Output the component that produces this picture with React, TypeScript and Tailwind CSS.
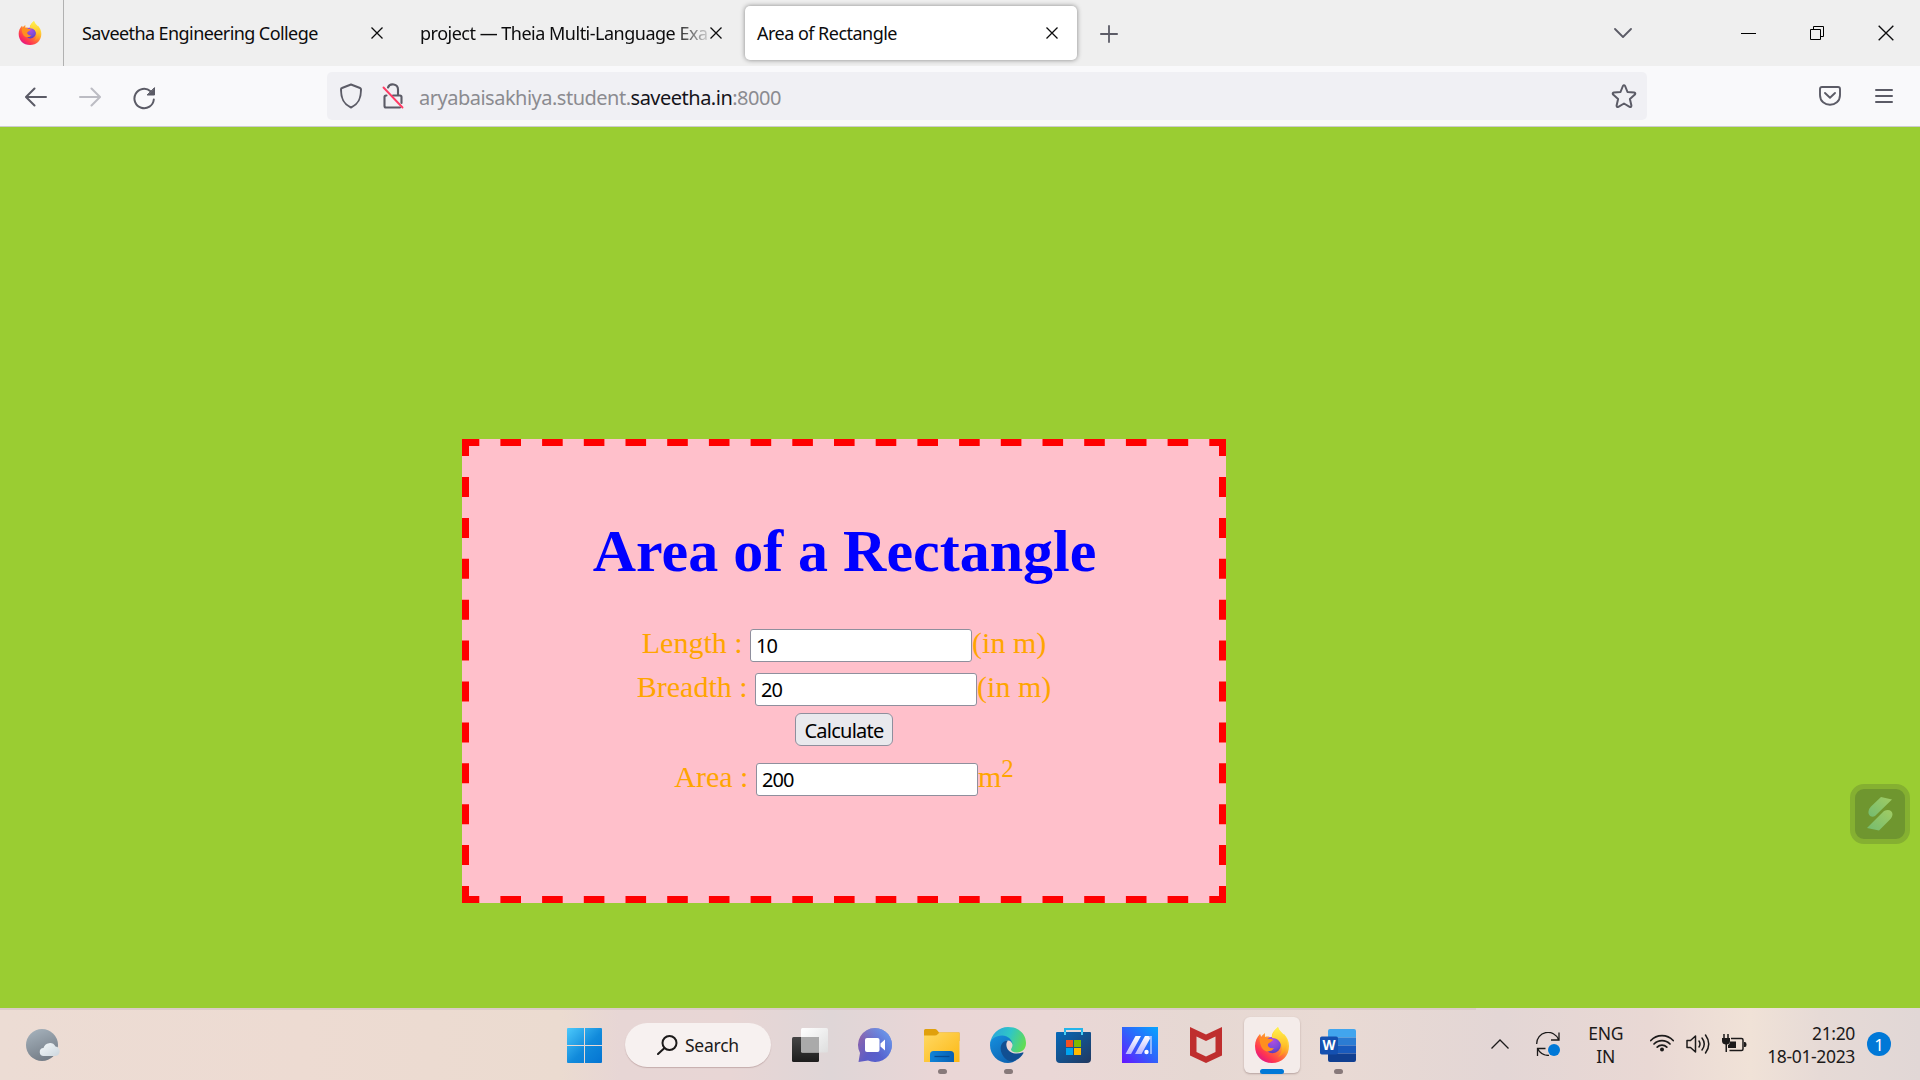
import React from "react";

const ui = "font-['Noto_Sans',sans-serif]";

function FirefoxLogo({ id, size }: { id: string; size: number }) {
  return (
    <svg width={size} height={size} viewBox="0 0 36 36" className="shrink-0">
      <defs>
        <linearGradient id={`${id}-body`} x1="0.85" y1="0.1" x2="0.2" y2="0.95">
          <stop offset="0" stopColor="#fff44f" />
          <stop offset="0.3" stopColor="#ffbd30" />
          <stop offset="0.55" stopColor="#ff7139" />
          <stop offset="0.8" stopColor="#ff3650" />
          <stop offset="1" stopColor="#e31587" />
        </linearGradient>
        <linearGradient id={`${id}-flame`} x1="0.5" y1="0" x2="0.5" y2="1">
          <stop offset="0" stopColor="#fff44f" />
          <stop offset="0.6" stopColor="#ffc22b" />
          <stop offset="1" stopColor="#ff8a16" />
        </linearGradient>
        <radialGradient id={`${id}-globe`} cx="0.5" cy="0.25" r="0.8">
          <stop offset="0" stopColor="#b04de0" />
          <stop offset="0.6" stopColor="#7a4bd8" />
          <stop offset="1" stopColor="#5438b8" />
        </radialGradient>
      </defs>
      <path fill={`url(#${id}-body)`} d="M1 19C1 14 3 10 6 7l1 3c1-2 3-3 4-4l0 4c3-1 5 0 7 1C17 6 21 3 24 0c1 4 4 6 5 8l1-1c3 3 5 7 5 12 0 10-7 17-17 17S1 29 1 19Z" />
      <circle cx="18.6" cy="18" r="8.2" fill={`url(#${id}-globe)`} />
      <path fill={`url(#${id}-flame)`} d="M18 11c0-5 3-8 6-11 1 5 8 7 9 14 .8 7-3 14-9 16 3-3 4-6 4-9 0-5-4-10-10-10Z" />
      <path fill="#ff8f1f" d="M6 7l1 4c2-1 4-1 6 0 2 2 5 0 6 2-1 2-4 2-5 4-1 3 3 5 6 4-2 4-9 5-12 0-2-3-3-8-2-14Z" />
    </svg>
  );
}

function Close({ size = 12, w = 1.3 }: { size?: number; w?: number }) {
  return (
    <svg width={size} height={size} viewBox="0 0 12 12" className="shrink-0" fill="none" stroke="#0c0c0d" strokeWidth={w}>
      <path d="M.5.5l11 11M11.5.5l-11 11" />
    </svg>
  );
}

function TabStrip() {
  return (
    <header className="flex h-[66px] items-center bg-[#efefef]">
      <div className="flex h-full w-[64px] items-center border-r border-[#b1b1b1] pl-[18px]">
        <FirefoxLogo id="ff-tab" size={24} />
      </div>
      <div className="flex w-[338px] items-center pl-[18px] pr-[19px]">
        <span className="grow whitespace-nowrap text-[18px] tracking-[-0.58px]">Saveetha Engineering College</span>
        <Close />
      </div>
      <div className="flex w-[338px] items-center justify-between pl-[18px] pr-[18px]">
        <span className="whitespace-nowrap text-[18px] tracking-[-0.5px] [mask-image:linear-gradient(to_right,black_88%,transparent_102%)]">
          project — Theia Multi-Language Exa
        </span>
        <Close />
      </div>
      <div className="ml-[5px] flex h-[54px] w-[332px] items-center justify-between rounded-[5px] bg-white pl-[12px] pr-[19px] shadow-[0_0_5px_rgba(0,0,0,0.45)]">
        <span className="whitespace-nowrap text-[18px] tracking-[-0.52px]">Area of Rectangle</span>
        <Close />
      </div>
      <svg width="18" height="18" viewBox="0 0 18 18" className="relative top-px ml-[23px]" stroke="#5b5b66" strokeWidth="1.8" strokeLinecap="round">
        <path d="M9 .9v16.2M.9 9h16.2" />
      </svg>
      <div className="ml-auto flex items-center">
        <svg width="18" height="10" viewBox="0 0 18 10" className="mr-[109px]" fill="none" stroke="#5b5b66" strokeWidth="1.8" strokeLinecap="round" strokeLinejoin="round">
          <path d="M1 1l8 8 8-8" />
        </svg>
        <div className="mr-[54px] h-px w-[15px] bg-black" />
        <svg width="14" height="14" viewBox="0 0 14 14" className="mr-[54px]" fill="none" stroke="#000">
          <path d="M.5 3.5h10v10H.5zM3.5 3.500V.5h10v10h-3" />
        </svg>
        <div className="mr-[26px]"><Close size={16} w={1} /></div>
      </div>
    </header>
  );
}

function Toolbar() {
  return (
    <nav className="flex h-[61px] items-center border-b border-[#cccccf] bg-[#f9f9fb]">
      <svg width="22" height="20" viewBox="0 0 22 20" className="ml-[25px] mt-[2px]" fill="none" stroke="#5b5b66" strokeWidth="2" strokeLinecap="round" strokeLinejoin="round">
        <path d="M21 10H1.500M9.500 1.500L1 10l8.500 8.500" />
      </svg>
      <svg width="22" height="20" viewBox="0 0 22 20" className="ml-[32px] mt-[2px]" fill="none" stroke="#bcbcc3" strokeWidth="2" strokeLinecap="round" strokeLinejoin="round">
        <path d="M1 10h19.500M12.500 1.500L21 10l-8.500 8.500" />
      </svg>
      <svg width="23" height="23" viewBox="0 0 23 23" className="ml-[32px] mt-[4px]" fill="none" stroke="#5b5b66" strokeWidth="2" strokeLinecap="round">
        <path d="M20.800 12.500A9.700 9.700 0 1 1 17.500 4.200" />
        <path d="M21.500 1v7h-7z" fill="#5b5b66" strokeWidth="1" strokeLinejoin="round" />
      </svg>
      <div className="ml-[171px] flex h-[48px] w-[1320px] items-center rounded-[5px] bg-[#f0f0f4] pl-[12px] pr-[10px]">
        <svg width="24" height="26" viewBox="0 0 24 26" fill="none" stroke="#5b5b66" strokeWidth="2" strokeLinejoin="round">
          <path d="M12 1.500L21 5q1 .4 1 1.500C22 15 20 21 12 24.500 4 21 2 15 2 6.500 2 5.400 2 5.300 3 5Z" />
        </svg>
        <svg width="22" height="26" viewBox="0 0 22 26" className="ml-[19px]" fill="none" stroke="#5b5b66" strokeWidth="2.100" strokeLinecap="round">
          <path d="M6 4.500C8-.5 16 1 16 6.500V12" />
          <path d="M4.500 12.500H4q-1.500 0-1.500 1.500v9q0 1.500 1.500 1.500h14M11 12.500h7q1.500 0 1.500 1.500v6" />
          <path d="M1.500 4.500l19 20" stroke="#ff3b64" strokeWidth="1.900" />
        </svg>
        <span className="ml-[15px] mt-[3px] whitespace-nowrap text-[20px] tracking-[-0.5px] text-[#8b8b90]">
          aryabaisakhiya.student.<span className="text-[#15141a]">saveetha.in</span>:8000
        </span>
        <svg width="26" height="25" viewBox="0 0 26 25" className="ml-auto" fill="none" stroke="#5b5b66" strokeWidth="2" strokeLinejoin="round">
          <path d="M11.900 2q1.100-1.500 2.200 0l2.400 6 6.700.6q1.800.4.700 2l-5 4.400 1.500 6.500q0 2-1.800 1.300L13 19.500l-5.600 3.300q-1.800.7-1.800-1.300L7.100 15l-5-4.400q-1.100-1.600.7-2L9.500 8Z" />
        </svg>
      </div>
      <svg width="22" height="20" viewBox="0 0 22 20" className="ml-auto mr-[34px]" fill="none" stroke="#5b5b66" strokeWidth="1.900" strokeLinecap="round" strokeLinejoin="round">
        <path d="M3 1h16q2 0 2 2v6c0 13-20 13-20 0V3q0-2 2-2Z" />
        <path d="M6 7l5 4.800L16 7" />
      </svg>
      <div className="mr-[27px] flex w-[18px] flex-col gap-[4px]">
        <div className="h-[2px] rounded-full bg-[#5b5b66]" />
        <div className="h-[2px] rounded-full bg-[#5b5b66]" />
        <div className="h-[2px] rounded-full bg-[#5b5b66]" />
      </div>
    </nav>
  );
}

function Field({ label, value, unit }: { label: string; value: string; unit: React.ReactNode }) {
  return (
    <div className="flex h-[33px] items-center justify-center whitespace-pre text-[30px] leading-[33px] text-[#ffa500]">
      <span className="mb-[6px]">{label} : </span>
      <input
        readOnly
        value={value}
        className="h-[33px] w-[222px] rounded-[3px] border border-[#8f8f9d] bg-white px-[5px] font-['Noto_Sans',sans-serif] text-[20px] tracking-[-0.9px] text-black outline-none"
      />
      <span className="mb-[6px]">{unit}</span>
    </div>
  );
}

function DashedFrame() {
  return (
    <svg width="764" height="464" className="pointer-events-none absolute inset-0" stroke="#f00" strokeWidth="7">
      <path d="M0 3.500H764M0 460.500H764" strokeDasharray="20.600 21.100" strokeDashoffset="3.300" />
      <path d="M3.500 0V464M760.500 0V464" strokeDasharray="20 20.900" strokeDashoffset="2.900" />
    </svg>
  );
}

function Page() {
  return (
    <main className="relative h-[881px] bg-[#9acd32] pl-[462px] pt-[312px]">
      <section className="relative h-[464px] w-[764px] bg-[#ffc0cb] pt-[78px] text-center font-['Liberation_Serif',serif]">
        <DashedFrame />
        <h1 className="pl-px text-[60px] font-bold leading-[69px] text-[#0000ff]">Area of a Rectangle</h1>
        <div className="mt-[43px]">
          <Field label="Length" value="10" unit="(in m)" />
        </div>
        <div className="mt-[11px]">
          <Field label="Breadth" value="20" unit="(in m)" />
        </div>
        <button className="mx-auto mt-[7px] block h-[33px] w-[98px] rounded-[6px] border border-[#8f8f9d] bg-[#e9e9ed] pt-[2px] font-['Noto_Sans',sans-serif] text-[20px] leading-[29px] tracking-[-0.75px] text-black">
          Calculate
        </button>
        <div className="mt-[17px]">
          <Field label="Area" value="200" unit={<>m<sup className="relative -top-[10px] align-baseline text-[25px] leading-none">2</sup></>} />
        </div>
      </section>
      <div className="absolute right-[10px] top-[657px] flex size-[60px] items-center justify-center rounded-[14px] border-[5px] border-[#85b031] bg-[#6f962f]">
        <svg width="26" height="34" viewBox="0 0 26 34">
          <defs>
            <linearGradient id="leaf" x1="1" y1="0" x2="0" y2="1">
              <stop offset="0" stopColor="#a1cc64" />
              <stop offset="1" stopColor="#74bb70" />
            </linearGradient>
          </defs>
          <path fill="url(#leaf)" d="M14 0l11 2.500L8 19c-4 2-7-1-6.500-4.500Q1.500 12 4 9.500Z" />
          <path fill="url(#leaf)" d="M0 31l17-17c4-2 8-1 8.500 3 0 2-1 4-2.500 5.500L12 33.500Z" />
        </svg>
      </div>
    </main>
  );
}

function AppCell({ children, running }: { children: React.ReactNode; running?: boolean }) {
  return (
    <div className="relative flex h-full w-[66px] items-center justify-center">
      {children}
      {running && <span className="absolute bottom-[6px] h-[5px] w-[9px] rounded-full bg-[#87797a]" />}
    </div>
  );
}

function Apps() {
  return (
    <div className="ml-[6px] flex h-full">
      <AppCell>
        <svg width="36" height="34" viewBox="0 0 36 34">
          <defs>
            <linearGradient id="tv-dark" x1="0" y1="0" x2="0" y2="1"><stop stopColor="#454545" /><stop offset="1" stopColor="#1d1d1d" /></linearGradient>
            <linearGradient id="tv-light" x1="0" y1="0" x2="1" y2="1"><stop stopColor="#fff" /><stop offset="1" stopColor="#dedede" /></linearGradient>
          </defs>
          <rect y="9" width="27" height="25" rx="1.500" fill="url(#tv-dark)" />
          <rect x="9" width="27" height="24.500" rx="1.500" fill="url(#tv-light)" />
          <path d="M9 9h18v15.500H10.500Q9 24.500 9 23Z" fill="#aaa" />
        </svg>
      </AppCell>
      <AppCell>
        <svg width="34" height="34" viewBox="0 0 34 34" className="mr-[2px]">
          <defs><linearGradient id="chat" x1="0.100" y1="0.200" x2="0.900" y2="0.700"><stop stopColor="#8a65ae" /><stop offset="0.500" stopColor="#5d5cc6" /><stop offset="1" stopColor="#5563d0" /></linearGradient>
          <linearGradient id="chat-top" x1="1" y1="0" x2="0.400" y2="0.600"><stop stopColor="#6fa6f2" /><stop offset="1" stopColor="#6fa6f2" stopOpacity="0" /></linearGradient></defs>
          <path fill="url(#chat)" d="M17 0a17 17 0 1 1-7 32.500L.5 34 2 25A17 17 0 0 1 17 0Z" />
          <path fill="url(#chat-top)" d="M17 0a17 17 0 1 1-7 32.500L.5 34 2 25A17 17 0 0 1 17 0Z" />
          <rect x="7" y="10" width="14.500" height="14" rx="2" fill="#fff" />
          <path d="M22.500 15.500l4.500-4v11l-4.500-4z" fill="#fff" />
        </svg>
      </AppCell>
      <AppCell running>
        <svg width="36" height="33" viewBox="0 0 36 33">
          <defs><linearGradient id="fold" x1="0" y1="0" x2="1" y2="1"><stop stopColor="#ffd964" /><stop offset="1" stopColor="#fcb814" /></linearGradient>
          <linearGradient id="fold-blue" x1="0" y1="0" x2="1" y2="0"><stop stopColor="#0f83d8" /><stop offset="1" stopColor="#0860b4" /></linearGradient></defs>
          <path d="M0 1.500Q0 0 1.500 0H11q1 0 2 1l2 2.500h20.500V12H0Z" fill="#e0a00c" />
          <path d="M0 6.500h11q1.500 0 3-1.500l1.500-1.500h19q1 0 1 1V33H0Z" fill="url(#fold)" />
          <path d="M6 33v-7.500q0-3.500 3.500-3.500h17q3.500 0 3.500 3.500V33Z" fill="url(#fold-blue)" />
          <path d="M10.500 27.500h15" stroke="#064a91" strokeWidth="1.300" />
        </svg>
      </AppCell>
      <AppCell running>
        <svg width="36" height="36" viewBox="0 0 36 36">
          <defs>
            <linearGradient id="edge-top" x1="0" y1="0.300" x2="1" y2="0.600"><stop stopColor="#2ba5dd" /><stop offset="0.500" stopColor="#2fc6c6" /><stop offset="1" stopColor="#63dc52" /></linearGradient>
            <linearGradient id="edge-mid" x1="0" y1="0" x2="0.700" y2="1"><stop stopColor="#1590df" /><stop offset="1" stopColor="#0e62b0" /></linearGradient>
          </defs>
          <path fill="url(#edge-top)" d="M0 17C1 7 9 0 18 0c11 0 18 7 18 16 0 6-4 9.500-9 9.500-4 0-6-1.500-6-3 0-1 1.500-2 1.500-4.500C22 12 14 6 7 11c-4 2-6 5-7 6Z" />
          <path fill="url(#edge-mid)" d="M0 18C0 12 6 8.500 12 8.500c6 0 10.500 4.500 10.500 9C22 15 20 13.500 18 13.500c-4 0-6.500 6-2.500 12.500 2 4 7 7 12 6.500C24 35 21 36 18 36 8 36 0 28 0 18Z" />
          <path fill="#114f92" d="M18 13.500C11 14 9 21 12 27s9 9.500 14 6c3-1 6-4 7.500-7q.2-1-1-.6C26 28 19 26 17 21c-1-3-1-5 1-7.500Z" />
        </svg>
      </AppCell>
      <AppCell>
        <svg width="35" height="35" viewBox="0 0 35 35" className="mr-px">
          <defs><linearGradient id="store" x1="0" y1="0" x2="1" y2="1"><stop stopColor="#0669b9" /><stop offset="1" stopColor="#22385f" /></linearGradient></defs>
          <path d="M9 7V1h17v6" fill="none" stroke="#24b4ea" strokeWidth="2" />
          <path d="M1 4h33q1 0 1 1v26q0 4-4 4H4q-4 0-4-4V5q0-1 1-1Z" fill="url(#store)" />
          <path d="M9 4V7M26 4V7" stroke="#4bd0f5" strokeWidth="2" />
          <path d="M10 12h7v7h-7z" fill="#f25022" /><path d="M18 12h7v7h-7z" fill="#7fba00" />
          <path d="M10 20h7v7h-7z" fill="#00a4ef" /><path d="M18 20h7v7h-7z" fill="#ffb900" />
        </svg>
      </AppCell>
      <AppCell>
        <svg width="36" height="36" viewBox="0 0 36 36">
          <defs><linearGradient id="asus" x1="1" y1="0" x2="0" y2="1"><stop stopColor="#05a6ff" /><stop offset="0.500" stopColor="#2f63fb" /><stop offset="1" stopColor="#6614ff" /></linearGradient>
          <linearGradient id="asus-stroke" x1="0" y1="1" x2="0" y2="0"><stop stopColor="#b9b4ff" /><stop offset="1" stopColor="#fff" /></linearGradient></defs>
          <path d="M0 0h36v36H0z" fill="url(#asus)" />
          <path d="M3.500 27L13.500 9H19L9 27ZM13 27L23 9h6.500L19.500 27Z" fill="url(#asus-stroke)" />
          <path d="M26.500 9h3.300v18h-1.600V12Z" fill="#a9c6ff" />
          <circle cx="24.500" cy="25" r="2.200" fill="#fff" />
        </svg>
      </AppCell>
      <AppCell>
        <svg width="32" height="36" viewBox="0 0 32 36">
          <path fillRule="evenodd" fill="#bf2e2e" d="M0 0l16 7.500L32 0v28.500L16 36 0 28.500ZM6.500 9.500V25L16 29.500 25.500 25V9.500L16 14Z" />
        </svg>
      </AppCell>
      <AppCell>
        <div className="relative flex size-[56px] items-center justify-center rounded-[6px] bg-[#f4ecea] shadow-[0_1px_2px_rgba(90,60,60,0.35)]">
          <FirefoxLogo id="ff-task" size={36} />
          <span className="absolute -bottom-px h-[5px] w-[24px] rounded-full bg-[#0078d7]" />
        </div>
      </AppCell>
      <AppCell running>
        <svg width="36" height="33" viewBox="0 0 36 33">
          <path d="M10 0h24q2 0 2 2v6.500H8V2q0-2 2-2Z" fill="#41a5ee" />
          <path d="M8 8.500h28v8H8z" fill="#2b7cd3" />
          <path d="M8 16.500h28v8H8z" fill="#185abd" />
          <path d="M8 24.500h28V31q0 2-2 2H10q-2 0-2-2Z" fill="#103f91" />
          <rect y="7.500" width="18" height="18" rx="1.800" fill="#1450b0" />
          <text x="9" y="21" textAnchor="middle" fontFamily="Noto Sans" fontWeight="700" fontSize="13.500" fill="#fff">W</text>
        </svg>
      </AppCell>
    </div>
  );
}

function Tray() {
  return (
    <div className="ml-auto flex h-full items-center text-[#1c1a1a]">
      <svg width="18" height="10" viewBox="0 0 18 10" className="mb-[3px] mr-[27px]" fill="none" stroke="#1c1a1a" strokeWidth="1.300">
        <path d="M.5 9.500L9 1l8.500 8.500" />
      </svg>
      <svg width="24" height="24" viewBox="0 0 24 24" className="mb-[2px] mr-[28px]" fill="none" stroke="#1c1a1a" strokeWidth="1.300">
        <path d="M.7 12A11.300 11.300 0 0 1 22.500 7.500M23 .5V8h-8" />
        <path d="M1.500 24v-7.500h8M1.500 16.500C4 21.500 8 23.500 13 23.400" />
        <circle cx="18" cy="18" r="6" fill="#0078d7" stroke="none" />
      </svg>
      <div className="mr-[27px] w-[35px] text-center text-[17.500px] leading-[23px] tracking-[-0.3px]">
        ENG<br />IN
      </div>
      <svg width="24" height="18" viewBox="0 0 24 18" className="mb-[4px] mr-[12px]" fill="none" stroke="#1c1a1a" strokeWidth="1.700" strokeLinecap="round">
        <path d="M.8 6.500a15.200 15.200 0 0 1 22.400 0M4 10a11 11 0 0 1 16 0M7.200 13.200a6.600 6.600 0 0 1 9.600 0" />
        <circle cx="12" cy="15.500" r="2" fill="#1c1a1a" stroke="none" />
      </svg>
      <svg width="24" height="20" viewBox="0 0 24 20" className="mb-[2px] mr-[12px]" fill="none" stroke="#1c1a1a" strokeWidth="1.500" strokeLinecap="round" strokeLinejoin="round">
        <path d="M1 6.500h3.500L9.500 2v16l-5-4.500H1Z" />
        <path d="M13 7q2 3 0 6M16 4q4.500 6 0 12M19.500 1q6.500 9 0 18" />
      </svg>
      <svg width="25" height="19" viewBox="0 0 25 19" className="mb-[4px] mr-[20px]" fill="none" stroke="#1c1a1a" strokeWidth="1.500">
        <path d="M9 4.500h10.500q1.500 0 1.500 1.500v9q0 1.500-1.500 1.500H7.500" />
        <path d="M22 8h1q1.500 0 1.500 2.500T23 13h-1z" fill="#1c1a1a" stroke="none" />
        <path d="M8 7.500h6v6.500H6v-3q2-1 2-3.500Z" fill="#1c1a1a" stroke="none" />
        <path d="M0 4h8v3q0 3-3 3.500V18H3.500v-7.500Q0 10 0 7Z" fill="#1c1a1a" stroke="none" />
        <path d="M2 0v4M6 0v4" />
      </svg>
      <div className="mb-px mr-[12px] whitespace-nowrap text-right text-[17.500px] leading-[23px] tracking-[-0.35px]">
        21:20<br />18-01-2023
      </div>
      <div className="mb-[2px] mr-[29px] flex size-[24px] items-center justify-center rounded-full bg-[#0078d7] text-[17px] leading-none text-white">1</div>
    </div>
  );
}

function Taskbar() {
  return (
    <footer className="relative flex h-[72px] items-center bg-[linear-gradient(to_right,#ecdcd4_0px,#eddbd2_300px,#ebdbd0_560px,#e7d6d5_620px,#e8d6d5_730px,#dfd6d7_830px,#ead6d6_940px,#ead7d6_1050px,#e6d8d3_1200px,#e9dad4_1330px,#e3d6d5_1500px,#e9d8d4_1650px,#f0e2d7_1750px,#e6dad6_1820px,#e1d7d6_1920px)] pt-[2px]">
      <div className="absolute left-0 top-0 h-[2px] w-[1476px] bg-[#dccbc8]" />
      <svg width="34" height="32" viewBox="0 0 34 32" className="ml-[26px]">
        <defs>
          <linearGradient id="moon" x1="0.200" y1="0" x2="0.600" y2="1"><stop stopColor="#a5b1bb" /><stop offset="1" stopColor="#737c86" /></linearGradient>
          <linearGradient id="cloud" x1="0" y1="0" x2="1" y2="1"><stop stopColor="#f5f9fb" /><stop offset="1" stopColor="#ccd6dd" /></linearGradient>
        </defs>
        <circle cx="16" cy="16" r="16" fill="url(#moon)" />
        <path d="M18 27a4 4 0 0 1-.5-8 6.500 6.500 0 0 1 12-1.500A4.800 4.800 0 0 1 29.500 27Z" fill="url(#cloud)" />
      </svg>
      <svg width="35" height="35" viewBox="0 0 35 35" className="ml-[507px]">
        <defs><linearGradient id="win" x1="0" y1="0" x2="1" y2="1"><stop stopColor="#4cc9fb" /><stop offset="0.550" stopColor="#118adb" /><stop offset="1" stopColor="#0474d2" /></linearGradient></defs>
        <path fill="url(#win)" d="M1 0h16v17H0V1Q0 0 1 0ZM18 0h16q1 0 1 1v16H18ZM0 18h17v17H1q-1 0-1-1ZM18 18h17v16q0 1-1 1H18Z" />
      </svg>
      <div className="ml-[23px] flex h-[44px] w-[146px] items-center rounded-full bg-[#f7f1f0] pl-[32px] shadow-[0_1px_1px_rgba(120,80,80,0.300)]">
        <svg width="21" height="20" viewBox="0 0 21 20" fill="none" stroke="#1c1a1a" strokeWidth="2" strokeLinecap="round">
          <circle cx="12.500" cy="8" r="7" />
          <path d="M7.500 13L1 19" />
        </svg>
        <span className="ml-[7px] text-[17.500px] tracking-[-0.250px] text-[#1c1a1a]">Search</span>
      </div>
      <Apps />
      <Tray />
    </footer>
  );
}

export default function App() {
  return (
    <div className={`${ui} h-[1080px] w-[1920px] overflow-hidden text-[#0c0c0d]`}>
      <TabStrip />
      <Toolbar />
      <Page />
      <Taskbar />
    </div>
  );
}
